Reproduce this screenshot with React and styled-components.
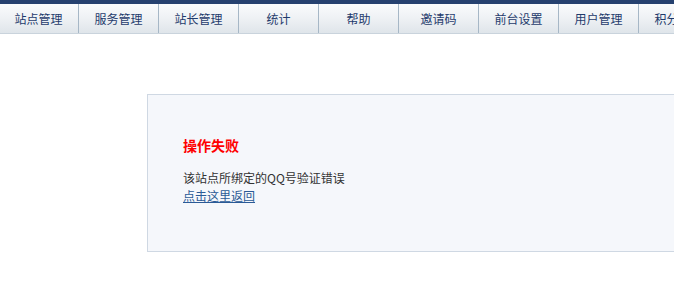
import React from 'react'
import styled, { createGlobalStyle } from 'styled-components'

const GlobalStyle = createGlobalStyle`
  html, body {
    margin: 0;
    padding: 0;
    background: #fff;
    font-family: "Noto Sans CJK SC", "DejaVu Sans", sans-serif;
    font-size: 12px;
    color: #333;
    overflow: hidden;
  }
`

const TopBar = styled.div`
  height: 4px;
  background: #26416f;
`

const Nav = styled.ul`
  display: flex;
  margin: 0 0 0 -1px;
  padding: 0;
  list-style: none;
  height: 29px;
  background: linear-gradient(to bottom, #fafbfc 0%, #eef1f4 50%, #dfe5ea 100%);
  border-bottom: 1px solid #c9d3dc;
  white-space: nowrap;
  overflow: hidden;
`

const NavItem = styled.li`
  flex: 0 0 79px;
  border-right: 1px solid #a6b7c6;
  display: flex;
  align-items: center;
  justify-content: center;
  font-size: 12px;
  color: #1f3b6c;
  cursor: pointer;
`

const Main = styled.div`
  padding: 60px 0 0 147px;
`

const MessageBox = styled.div`
  box-sizing: border-box;
  height: 158px;
  width: 600px;
  background: #f5f7fb;
  border: 1px solid #cfd8e3;
  padding: 40px 0 0 35px;
`

const Title = styled.h3`
  margin: 0 0 14px;
  font-size: 14px;
  font-weight: bold;
  color: #ff0000;
  line-height: 20px;
`

const Message = styled.p`
  margin: 0;
  line-height: 18px;
  color: #333;
`

const BackLink = styled.a`
  color: #2a5a96;
  text-decoration: underline;
  line-height: 18px;
`

const menu = ['站点管理', '服务管理', '站长管理', '统计', '帮助', '邀请码', '前台设置', '用户管理', '积分管理']

export default function App() {
  return (
    <>
      <GlobalStyle />
      <TopBar />
      <Nav>
        {menu.map(m => (
          <NavItem key={m}>{m}</NavItem>
        ))}
      </Nav>
      <Main>
        <MessageBox>
          <Title>操作失败</Title>
          <Message>该站点所绑定的QQ号验证错误</Message>
          <Message>
            <BackLink href="#">点击这里返回</BackLink>
          </Message>
        </MessageBox>
      </Main>
    </>
  )
}
